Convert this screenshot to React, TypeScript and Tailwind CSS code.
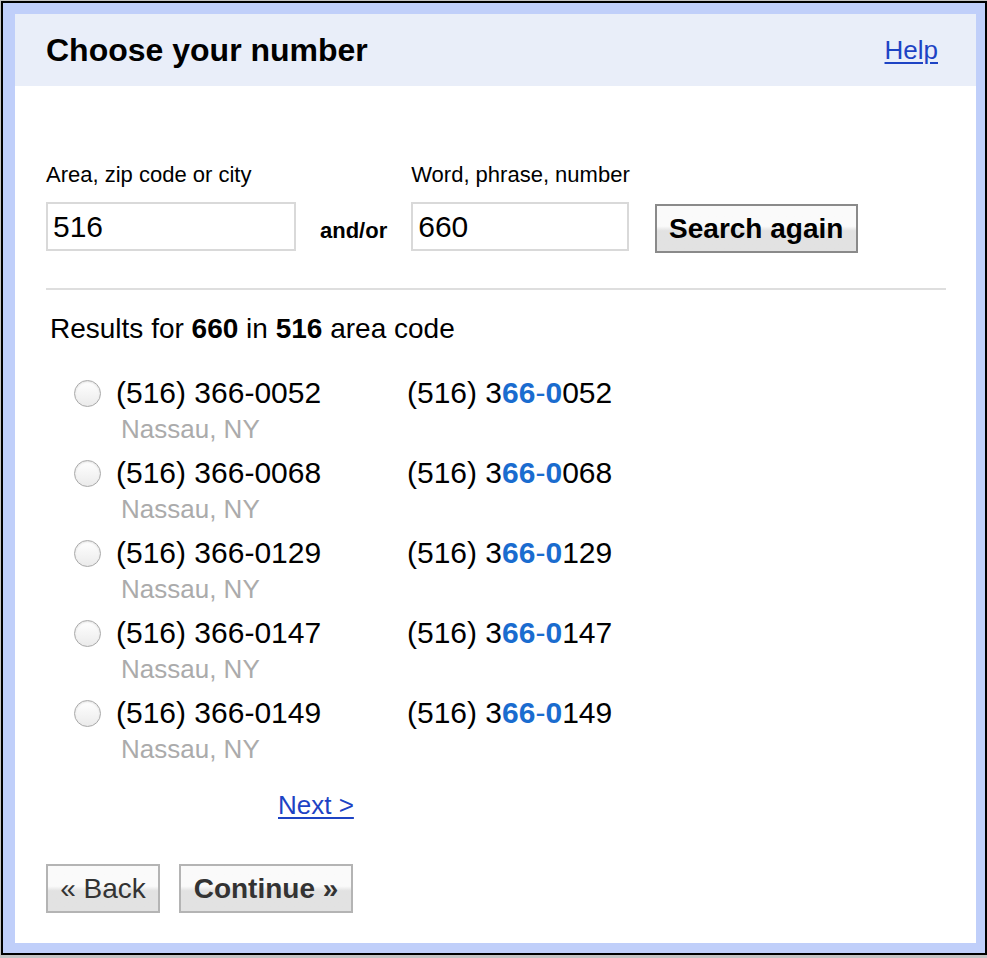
import { useState } from 'react';

type NumberOption = {
  number: string;
  city: string;
};

const OPTIONS: NumberOption[] = [
  { number: '0052', city: 'Nassau, NY' },
  { number: '0068', city: 'Nassau, NY' },
  { number: '0129', city: 'Nassau, NY' },
  { number: '0147', city: 'Nassau, NY' },
  { number: '0149', city: 'Nassau, NY' },
];

const btn =
  'h-[49px] border-2 bg-linear-to-b from-[#fafafa] from-45% to-[#e2e2e2] to-55% text-[28px] leading-none';

export default function App() {
  const [area, setArea] = useState('516');
  const [phrase, setPhrase] = useState('660');
  const [selected, setSelected] = useState<number | null>(null);

  return (
    <div className="h-[958px] bg-[#c4c4c4] pl-px pt-px font-['Liberation_Sans',Arial,sans-serif] text-black">
      <div className="flex h-[954px] w-[986px] border-2 border-black bg-[#c0cffa] pb-[10px] pl-[12px] pr-[9px] pt-[11px]">
        <div className="flex flex-1 flex-col bg-white">
          <header className="flex h-[72px] items-center justify-between bg-[#e9eef9] pl-[31px] pr-[38px]">
            <h1 className="text-[32px] font-bold leading-none">Choose your number</h1>
            <a href="#" className="text-[26px] leading-none text-[#1d43c4] underline underline-offset-[3px]">
              Help
            </a>
          </header>

          <section className="flex flex-col pl-[31px] pr-[30px] pt-[77px]">
            <div className="flex items-end">
              <div className="flex flex-col">
                <label className="text-[22px] leading-[24px]">Area, zip code or city</label>
                <input
                  className="mt-[15px] h-[49px] w-[250px] border-2 border-[#d9d9d9] pl-[5px] text-[30px] outline-none"
                  value={area}
                  onChange={(e) => setArea(e.target.value)}
                />
              </div>
              <div className="flex h-[49px] items-center pl-[24px] pr-[24px] pt-[7px] text-[22px] font-bold">and/or</div>
              <div className="flex flex-col">
                <label className="text-[22px] leading-[24px]">Word, phrase, number</label>
                <input
                  className="mt-[15px] h-[49px] w-[218px] border-2 border-[#d9d9d9] pl-[5px] text-[30px] outline-none"
                  value={phrase}
                  onChange={(e) => setPhrase(e.target.value)}
                />
              </div>
              <button className={`${btn} mb-[-2px] ml-[25px] w-[203px] border-[#8a8a8a] font-bold`}>Search again</button>
            </div>

            <div className="mt-[37px] h-[2px] bg-[#dedede]" />

            <p className="ml-[4px] mt-[23px] text-[28px] leading-[32px]">
              Results for <b>660</b> in <b>516</b> area code
            </p>

            <ul className="mt-[31px] flex flex-col gap-[12px]">
              {OPTIONS.map((opt, i) => (
                <li key={opt.number} className="flex items-start">
                  <div className="ml-[28px] flex h-[34px] items-center">
                    <button
                      onClick={() => setSelected(i)}
                      className="flex h-[27px] w-[27px] items-center justify-center rounded-full border border-[#a9a9a9] bg-linear-to-b from-white to-[#ebebeb] shadow-[inset_0_1px_2px_rgba(0,0,0,0.12)]"
                    >
                      {selected === i && <span className="h-[11px] w-[11px] rounded-full bg-[#333]" />}
                    </button>
                  </div>
                  <div className="ml-[15px] flex w-[291px] flex-col">
                    <span className="text-[30px] leading-[34px]">(516) 366-{opt.number}</span>
                    <span className="ml-[5px] mt-[4px] text-[26px] leading-[30px] text-[#ababab]">{opt.city}</span>
                  </div>
                  <span className="text-[30px] leading-[34px]">
                    (516) 3
                    <span className="text-[#1a6ccf]">
                      <b>66</b>-<b>0</b>
                    </span>
                    {opt.number.slice(1)}
                  </span>
                </li>
              ))}
            </ul>

            <a href="#" className="ml-[232px] mt-[26px] self-start text-[26px] leading-[30px] text-[#1d43c4] underline underline-offset-[3px]">
              Next &gt;
            </a>

            <div className="mt-[44px] flex gap-[19px]">
              <button className={`${btn} w-[114px] border-[#b4b4b4] text-[#333]`}>« Back</button>
              <button className={`${btn} w-[174px] border-[#b4b4b4] font-bold text-[#333]`}>Continue »</button>
            </div>
          </section>
        </div>
      </div>
    </div>
  );
}
